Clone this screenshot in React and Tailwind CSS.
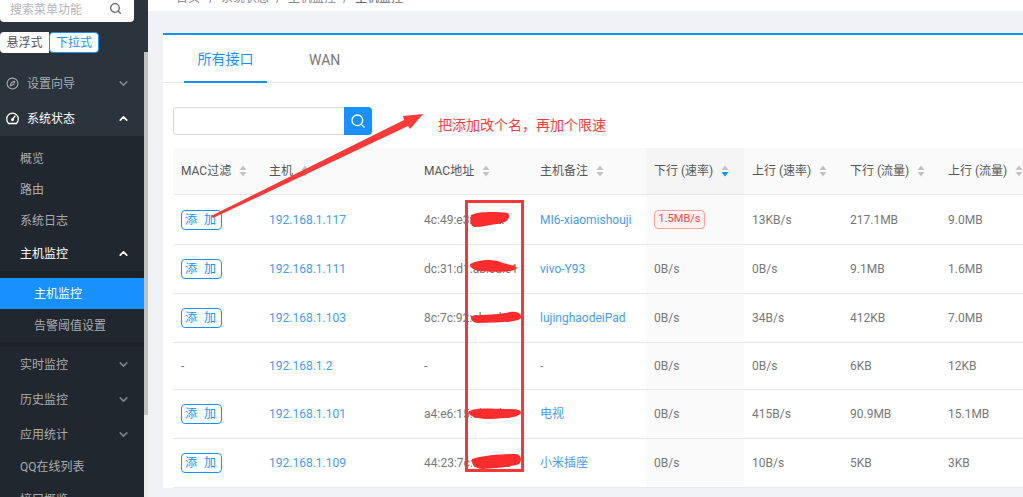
import React from "react";
import { Search, ChevronDown, ChevronUp, Compass } from "lucide-react";

const FONT = { fontFamily: 'Roboto,"Noto Sans CJK SC",sans-serif' };

function SortIcon({ active }) {
  return (
    <svg width="8" height="12" viewBox="0 0 8 12" className="shrink-0">
      <path d="M4 0.5 L7.5 5 H0.5 Z" fill="#c2c2c2" />
      <path d="M4 11.5 L7.5 7 H0.5 Z" fill={active ? "#1890ff" : "#c2c2c2"} />
    </svg>
  );
}

function GaugeIcon() {
  return (
    <svg width="13" height="13" viewBox="0 0 13 13" className="mr-2" fill="none" stroke="#fff" strokeWidth="1.3">
      <path d="M2.6 11.5 H10.4 C11.6 10.5 12.3 8.9 12.3 7 A5.8 5.8 0 0 0 0.7 7 C0.7 8.9 1.4 10.5 2.6 11.5 Z" />
      <path d="M6.5 7.5 L9 4" strokeLinecap="round" />
      <circle cx="6.5" cy="7.7" r="0.8" fill="#fff" />
    </svg>
  );
}

function Item({ label, open, white, icon, indent = "pl-5", h = "h-[35px]", cls = "" }) {
  return (
    <div className={`flex items-center justify-between pr-[14px] ${indent} ${h} ${cls} ${white ? "text-white" : "text-[#a9adb1]"}`}>
      <span className="flex items-center text-xs">
        {icon}
        {label}
      </span>
      {open === true && <ChevronUp size={13} strokeWidth={3} color="#fff" />}
      {open === false && <ChevronDown size={13} strokeWidth={3} color="#7d8388" />}
    </div>
  );
}

function Sidebar() {
  return (
    <aside className="w-[148px] shrink-0 h-full bg-[#2b343d] flex flex-col relative overflow-hidden">
      <div className="w-[134px] h-[22px] bg-white rounded-b flex items-center justify-between pl-[10px] pr-3 shrink-0">
        <span className="text-xs text-[#b5b5b5] -mt-[3px]">搜索菜单功能</span>
        <Search size={13} color="#666" strokeWidth={2.4} className="-mt-[5px]" />
      </div>
      <div className="flex mt-[10px] h-[21px] shrink-0 text-xs">
        <span className="w-[49px] bg-white rounded-l flex items-center justify-center text-[#555]">悬浮式</span>
        <span className="w-[50px] bg-white border border-[#1890ff] rounded flex items-center justify-center text-[#1890ff]">下拉式</span>
      </div>
      <div className="w-[144px] mt-[13px] flex flex-col">
        <Item indent="pl-[6px]" label="设置向导" open={false} icon={<Compass size={13} className="mr-2" color="#a9adb1" />} />
        <Item indent="pl-[6px]" white label="系统状态" open={true} icon={<GaugeIcon />} />
        <div className="bg-[#20272e] flex flex-col pt-[7px]">
          <Item h="h-[31px]" label="概览" />
          <Item h="h-[31px]" label="路由" />
          <Item h="h-[31px]" label="系统日志" />
          <Item white label="主机监控" open={true} />
          <div className="h-[7px] bg-[#1b2127]" />
          <Item h="h-[31px]" indent="pl-[34px]" white label="主机监控" cls="bg-[#1890ff]" />
          <Item h="h-[33px]" indent="pl-[34px]" label="告警阈值设置" />
          <div className="h-[5px] bg-[#1c2228]" />
          <Item label="实时监控" open={false} />
          <Item label="历史监控" open={false} />
          <Item label="应用统计" open={false} />
          <Item h="h-[30px]" label="QQ在线列表" />
          <Item label="接口概览" />
        </div>
      </div>
      <div className="absolute right-0 top-[52px] bottom-0 w-[4px] bg-[#eceded]">
        <div className="h-[363px] bg-[#c1c1c1]" />
      </div>
    </aside>
  );
}

const HEAD = [
  ["MAC过滤", "w-[88px]"],
  ["主机", "w-[155px]"],
  ["MAC地址", "w-[116px]"],
  ["主机备注", "w-[114px]"],
  ["下行 (速率)", "w-[98px] bg-[#f5f5f5]", true],
  ["上行 (速率)", "w-[98px]"],
  ["下行 (流量)", "w-[98px]"],
  ["上行 (流量)", "w-[83px]"],
];

const ROWS = [
  { h: "h-[50px]", add: true, ip: "192.168.1.117", mac: "4c:49:e3:ab:cd:", note: "MI6-xiaomishouji", d: "1.5MB/s", u: "13KB/s", dn: "217.1MB", up: "9.0MB" },
  { h: "h-[49px]", add: true, ip: "192.168.1.111", mac: "dc:31:d1:ab:cd:e1", note: "vivo-Y93", d: "0B/s", u: "0B/s", dn: "9.1MB", up: "1.6MB" },
  { h: "h-[49px]", add: true, ip: "192.168.1.103", mac: "8c:7c:92:ab:cd:e", note: "lujinghaodeiPad", d: "0B/s", u: "34B/s", dn: "412KB", up: "7.0MB" },
  { h: "h-[47px]", add: false, ip: "192.168.1.2", mac: "-", note: "-", d: "0B/s", u: "0B/s", dn: "6KB", up: "12KB" },
  { h: "h-[49px]", add: true, ip: "192.168.1.101", mac: "a4:e6:15:ab:cd:e", note: "电视", d: "0B/s", u: "415B/s", dn: "90.9MB", up: "15.1MB" },
  { h: "h-[49px]", add: true, ip: "192.168.1.109", mac: "44:23:7c:ab:cd:e", note: "小米插座", d: "0B/s", u: "10B/s", dn: "5KB", up: "3KB" },
];

function Cell({ w, children, color = "text-[#777]", cls = "" }) {
  return <div className={`${w} shrink-0 pl-2 flex items-center h-full text-xs ${color} ${cls}`}>{children}</div>;
}

function Row({ r }) {
  return (
    <div className={`flex items-center ${r.h} border-b border-[#e8e8e8]`}>
      <Cell w="w-[88px]">
        {r.add ? (
          <span className="w-[41px] h-[20px] border border-[#1890ff] rounded text-[#1890ff] flex items-center justify-center tracking-[2px]">添 加</span>
        ) : "-"}
      </Cell>
      <Cell w="w-[155px]" color="text-[#4a9bf5]">{r.ip}</Cell>
      <Cell w="w-[116px]">{r.mac}</Cell>
      <Cell w="w-[114px]" color="text-[#4a9bf5]">{r.note}</Cell>
      <Cell w="w-[98px]" cls="bg-[#fafafa]">
        {r.d === "1.5MB/s" ? (
          <span className="h-[19px] w-[51px] border border-[#ffa39e] bg-[#fff1f0] rounded text-[#f5474f] text-[11px] flex items-center justify-center">{r.d}</span>
        ) : r.d}
      </Cell>
      <Cell w="w-[98px]">{r.u}</Cell>
      <Cell w="w-[98px]">{r.dn}</Cell>
      <Cell w="w-[83px]">{r.up}</Cell>
    </div>
  );
}

function Annotations() {
  return (
    <>
      <svg className="absolute left-0 top-0 pointer-events-none" width="1023" height="497" viewBox="0 0 1023 497">
        <path d="M211 216 L404 120 L403 116 L423 114 L410 129 L408 126 L213 218 Z" fill="#f93a3a" />
        <rect x="466.5" y="201.5" width="56" height="269" fill="none" stroke="#f53838" strokeWidth="3" />
        <g fill="#fb2c2c">
          <path d="M471 215 C480 211 498 212 508 213 C511 218 507 223 496 224 C488 225 482 227 474 227 C469 224 470 219 471 215 Z" />
          <path d="M470 264 C480 259 495 259 503 263 C510 265 514 265 517 268 C514 273 490 272 478 271 C473 269 470 268 470 264 Z" />
          <path d="M471 316 C485 314 500 315 510 312 C518 311 522 314 521 318 C516 323 495 322 480 323 C473 323 470 320 471 316 Z" />
          <path d="M468 412 C475 407 490 409 505 409 C515 409 521 409 521 413 C518 418 505 418 490 419 C480 419 471 418 468 412 Z" />
          <path d="M472 459 C485 455 505 454 516 454 C522 455 522 461 519 464 C510 467 495 468 483 469 C475 469 471 464 472 459 Z" />
        </g>
      </svg>
      <span className="absolute left-[438px] top-[116px] text-sm leading-[18px] text-[#f73e3e]">把添加改个名，再加个限速</span>
    </>
  );
}

export default function App() {
  return (
    <div className="relative w-[1023px] h-[497px] overflow-hidden flex bg-[#f0f2f5]" style={FONT}>
      <Sidebar />
      <main className="flex-1 min-w-0 flex flex-col">
        <div className="h-[11px] bg-white shrink-0 overflow-hidden pl-[28px]">
          <div className="flex gap-[7px] text-xs leading-[18px] text-[#888] -mt-[11px]">
            <span className="mr-[2px]">首页</span><span>/</span><span>系统状态</span><span>/</span><span>主机监控</span><span>/</span><span className="text-[#666]">主机监控</span>
          </div>
        </div>
        <section className="ml-[15px] mt-[22px] bg-white border-t-2 border-[#1890ff] flex flex-col w-[860px] h-[455px]">
          <div className="h-[48px] border-b border-[#e8e8e8] flex shrink-0">
            <div className="ml-[21px] w-[83px] h-[48px] pt-[2px] border-b-2 border-[#1890ff] flex items-center justify-center text-sm text-[#1890ff]">所有接口</div>
            <div className="ml-[42px] h-[48px] pt-[2px] flex items-center text-sm text-[#777]">WAN</div>
          </div>
          <div className="ml-[10px] mt-[24px] flex w-[199px] h-[28px] shrink-0">
            <div className="flex-1 border border-[#d9d9d9] border-r-0 rounded-l" />
            <div className="w-[28px] bg-[#1890ff] rounded-r flex items-center justify-center">
              <Search size={16} color="#fff" strokeWidth={2} />
            </div>
          </div>
          <div className="ml-[10px] mt-[13px] flex flex-col">
            <div className="flex items-center h-[47px] bg-[#fafafa] border-b border-[#e8e8e8]">
              {HEAD.map(([t, w, a]) => (
                <div key={t} className={`${w} shrink-0 pl-2 h-full flex items-center gap-[8px] text-xs text-[#555]`}>
                  <span className="whitespace-nowrap">{t}</span>
                  <SortIcon active={a} />
                </div>
              ))}
            </div>
            {ROWS.map((r) => <Row key={r.ip} r={r} />)}
          </div>
        </section>
      </main>
      <Annotations />
    </div>
  );
}
